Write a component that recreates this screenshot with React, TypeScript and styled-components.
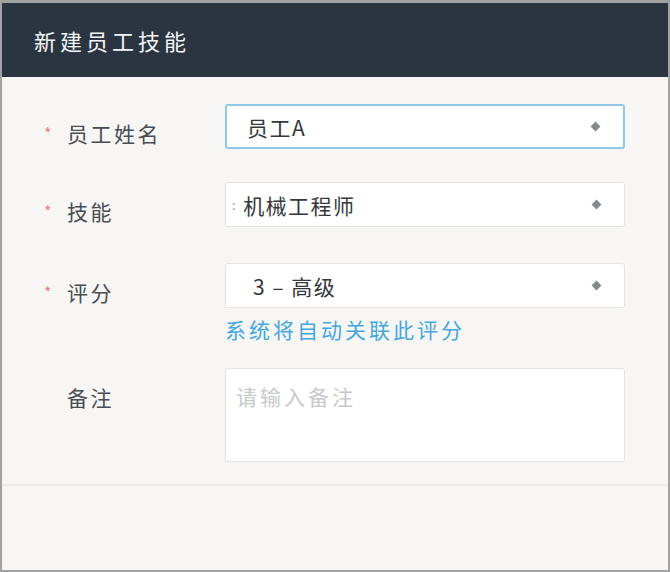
import React from 'react';
import styled, { createGlobalStyle } from 'styled-components';

const GlobalStyle = createGlobalStyle`
  html, body {
    margin: 0;
    padding: 0;
    background: #ffffff;
  }
  * {
    box-sizing: border-box;
  }
`;

const FONT = `"Noto Sans CJK SC", "Noto Sans", "Liberation Sans", sans-serif`;

const Dialog = styled.div`
  width: 670px;
  height: 572px;
  display: flex;
  flex-direction: column;
  border: 2px solid #a2a2a2;
  border-top-width: 3px;
  background: #f7f6f5;
  font-family: ${FONT};
  overflow: hidden;
`;

const Header = styled.div`
  height: 74px;
  display: flex;
  align-items: center;
  padding-left: 32px;
  background: #2b3541;
  color: #f2f4f6;
  font-size: 22px;
  letter-spacing: 4px;
`;

const Body = styled.div`
  padding-top: 27px;
  height: 409px;
  border-bottom: 2px solid #ebeae9;
`;

const Row = styled.div<{ $gap: number }>`
  display: grid;
  grid-template-columns: 223px 400px;
  align-items: start;
  margin-bottom: ${(p) => p.$gap}px;
`;

const Label = styled.div`
  display: flex;
  align-items: center;
  padding-left: 42px;
  padding-top: 14px;
  font-size: 21px;
  letter-spacing: 2.5px;
  line-height: 30px;
  color: #4a4d52;
`;

const Star = styled.span<{ $show: boolean }>`
  width: 23px;
  color: #ea7f7f;
  font-size: 16px;
  letter-spacing: 0;
  visibility: ${(p) => (p.$show ? 'visible' : 'hidden')};
`;

const Select = styled.div<{ $focused?: boolean; $pad: number }>`
  height: 45px;
  display: flex;
  align-items: center;
  padding-left: ${(p) => p.$pad}px;
  padding-right: 22px;
  background: #ffffff;
  border: ${(p) => (p.$focused ? '2px solid #8fc9e8' : '1px solid #e4e3e2')};
  border-radius: 3px;
  font-size: 21px;
  letter-spacing: 1.5px;
  color: #34373b;
`;

const Value = styled.span`
  flex: 1;
`;

const Prefix = styled.span`
  font-size: 13px;
  color: #9a9a9a;
  margin-right: 6px;
`;

const Hint = styled.div`
  margin-top: 7px;
  font-size: 21px;
  letter-spacing: 3px;
  line-height: 28px;
  color: #45a7de;
`;

const TextArea = styled.div`
  height: 94px;
  padding: 12px 10px;
  background: #ffffff;
  border: 1px solid #e4e3e2;
  border-radius: 3px;
  font-size: 21px;
  letter-spacing: 3px;
  line-height: 30px;
  color: #c9cacb;
`;

const Footer = styled.div`
  flex: 1;
`;

function Diamond(): JSX.Element {
  return (
    <svg width="11" height="11" viewBox="0 0 10 10">
      <path d="M5 0.5 L9.5 5 L5 9.5 L0.5 5 Z" fill="#86898c" />
    </svg>
  );
}

function App(): JSX.Element {
  return (
    <>
      <GlobalStyle />
      <Dialog>
        <Header>新建员工技能</Header>
        <Body>
          <Row $gap={33}>
            <Label>
              <Star $show>*</Star>员工姓名
            </Label>
            <Select $focused $pad={20}>
              <Value>员工A</Value>
              <Diamond />
            </Select>
          </Row>
          <Row $gap={36}>
            <Label>
              <Star $show>*</Star>技能
            </Label>
            <Select $pad={6}>
              <Prefix>:</Prefix>
              <Value>机械工程师</Value>
              <Diamond />
            </Select>
          </Row>
          <Row $gap={25}>
            <Label>
              <Star $show>*</Star>评分
            </Label>
            <div>
              <Select $pad={27}>
                <Value>3 – 高级</Value>
                <Diamond />
              </Select>
              <Hint>系统将自动关联此评分</Hint>
            </div>
          </Row>
          <Row $gap={0}>
            <Label>
              <Star $show={false}>*</Star>备注
            </Label>
            <TextArea>请输入备注</TextArea>
          </Row>
        </Body>
        <Footer />
      </Dialog>
    </>
  );
}

export default App;
